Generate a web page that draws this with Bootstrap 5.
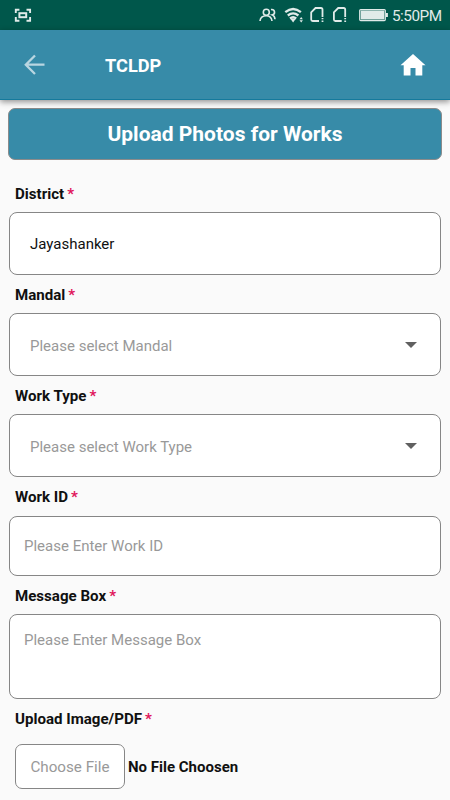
<!DOCTYPE html>
<html lang="en">
<head>
<meta charset="utf-8">
<meta name="viewport" content="width=device-width, initial-scale=1">
<title>TCLDP</title>
<link href="https://cdn.jsdelivr.net/npm/bootstrap@5.3.0/dist/css/bootstrap.min.css" rel="stylesheet">
<style>
body{background:#fafafa;font-family:Roboto,"Liberation Sans",sans-serif;font-size:15px;color:#101010;height:800px;overflow:hidden}
.status{height:30px;background:#00574b;color:#e0ebe9;font-size:15px}
.appbar{height:70px;background:#378ba8;border-bottom:1px solid #157a9c;box-shadow:0 2px 6px rgba(0,0,0,.42);padding:0 24.5px 0 23px}
.appbar-title{font-size:18.2px;line-height:20px;margin-left:59px;padding-top:2px}
.banner{height:52px;margin:8px 8px 0;border:1px solid #8b8b8b;border-radius:7px;background:#378ba8;font-size:21px;padding-top:2px}
.field-label{height:38.4px;padding:2px 0 0 15px;font-weight:700;line-height:20px;margin:0;font-size:15.1px}
.field-label.first{margin-top:13.6px}
.req{color:#e0145a;margin-left:3px;font-weight:700}
.box{margin:0 9px;width:432px;border:1px solid #868686;border-radius:8px;background:#fff;color:#101010;font-size:15px;line-height:20px}
.box::placeholder,.hint{color:#999;opacity:1}
.hint{padding-top:1px}
.pick{height:62.8px;padding:1px 23px 0 20px}
.entry{height:60px;padding:0 14px}
.message{height:85px;padding:15px 14px;resize:none}
.choose{width:110px;height:45px;border:1px solid #868686;border-radius:7px;background:#fff;color:#999;font-size:15.2px}
.files{margin:7px 0 0 15px;gap:3px}
.file-text{padding-top:1px}
</style>
</head>
<body>
<div class="status d-flex align-items-center">
  <svg width="450" height="30" viewBox="0 0 450 30" fill="none" stroke="#e0ebe9" stroke-width="1.6">
    <path d="M15.800 13v-3.200h3.600M26.500 9.800h3.600V13M30.100 17v3.700h-3.600M19.400 20.700h-3.600V17" stroke-width="1.900"/>
    <rect x="19.400" y="13.200" width="6.800" height="4" stroke-width="2"/>
    <circle cx="266.300" cy="12.300" r="3"/>
    <path d="M260 21c.3-3.500 2.500-5.300 6.300-5.300 3.400 0 5.200 1.700 5.700 5.300M271 9.600c4-.7 4.700 4.500 1.500 5.300 1.600.6 2.300 2 2.500 4.300"/>
    <path stroke-width="2.300" d="M285.300 12.200q7.800-6.500 15.600 0M287.800 15.500q5.300-4.300 10.600 0M290 18.500q3.100-2.600 6.200 0"/>
    <path fill="#e0ebe9" stroke="none" d="M290.200 18.500h5.800l-2.900 4zM299.500 19.200l1.700-2.200 1.700 2.200zM299.500 20.200l1.700 2.200 1.700-2.200z"/>
    <path stroke-width="1.800" d="M322.500 17V9.500q0-1.500-1.500-1.500h-5.500l-4.300 4.300v7.200q0 1.500 1.500 1.500h6.300M322.500 18v1.300M322.500 20.500V22M345.200 17V9.500q0-1.500-1.500-1.500h-5.500l-4.300 4.300v7.200q0 1.500 1.500 1.500h6.300M345.200 18v1.300M345.200 20.500V22"/>
    <rect x="359.700" y="9.600" width="25.600" height="11" rx="1" stroke-width="1.200"/>
    <path fill="#e0ebe9" stroke="none" d="M360.700 10.600h23.600v9h-23.600zM386 13h1.900v4H386z"/>
    <text x="392" y="20.800" fill="#e0ebe9" stroke="none" font-size="15.300" textLength="50">5:50PM</text>
  </svg>
</div>
<header class="appbar d-flex align-items-center text-white position-relative">
  <svg width="23" height="24" viewBox="0 0 23 24" fill="none" stroke="#b9d6e1" stroke-width="2.300"><path d="M21.500 11.700H2.800M12 2.500L2.800 11.700 12 21"/></svg>
  <div class="appbar-title fw-bold">TCLDP</div>
  <svg class="ms-auto" width="26" height="22" viewBox="0 0 26 22" fill="#fff"><path d="M13 0l12.500 11.300h-3.200V21.500h-6.800V14h-5v7.500H3.700V11.300H.5z"/></svg>
</header>
<main>
  <h1 class="banner d-flex align-items-center justify-content-center fw-bold text-white">Upload Photos for Works</h1>
  <form>
    <label class="field-label first d-flex align-items-center">District<span class="req">*</span></label>
    <div class="box pick d-flex align-items-center">Jayashanker</div>
    <label class="field-label d-flex align-items-center">Mandal<span class="req">*</span></label>
    <div class="box pick d-flex align-items-center justify-content-between"><span class="hint">Please select Mandal</span><svg width="12" height="6" viewBox="0 0 12 6"><path d="M0 0h12L6 6z" fill="#606060"/></svg></div>
    <label class="field-label d-flex align-items-center">Work Type<span class="req">*</span></label>
    <div class="box pick d-flex align-items-center justify-content-between"><span class="hint">Please select Work Type</span><svg width="12" height="6" viewBox="0 0 12 6"><path d="M0 0h12L6 6z" fill="#606060"/></svg></div>
    <label class="field-label d-flex align-items-center" for="work">Work ID<span class="req">*</span></label>
    <input id="work" class="box entry d-block" placeholder="Please Enter Work ID">
    <label class="field-label d-flex align-items-center" for="msg">Message Box<span class="req">*</span></label>
    <textarea id="msg" class="box message d-block" placeholder="Please Enter Message Box"></textarea>
    <label class="field-label d-flex align-items-center">Upload Image/PDF<span class="req">*</span></label>
    <div class="files d-flex align-items-center">
      <button type="button" class="choose px-0 pb-0 file-text">Choose File</button>
      <span class="fw-bold file-text">No File Choosen</span>
    </div>
  </form>
</main>
<script src="https://cdn.jsdelivr.net/npm/bootstrap@5.3.0/dist/js/bootstrap.bundle.min.js"></script>
</body>
</html>
